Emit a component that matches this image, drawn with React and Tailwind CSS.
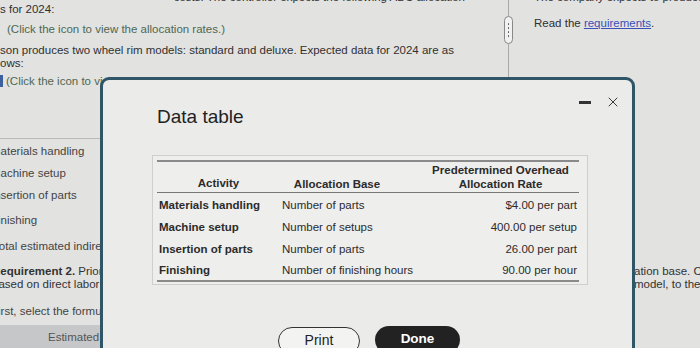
import { X } from "lucide-react";

const rows = [
  ["Materials handling", "Number of parts", "$4.00 per part"],
  ["Machine setup", "Number of setups", "400.00 per setup"],
  ["Insertion of parts", "Number of parts", "26.00 per part"],
  ["Finishing", "Number of finishing hours", "90.00 per hour"],
];

// Modal with the allocation rates table
const DataTableModal = () => (
  <div className="absolute left-[100px] top-[77px] h-[300px] w-[535px] rounded-t-[9px] border-[3px] border-[#2f5567] bg-[#ebebea]">
    <div className="mt-[14px] flex h-[16px] items-center justify-end gap-[14px] pr-[11px]">
      <span className="block h-[3px] w-[12px] bg-[#333]" />
      <X className="h-[16px] w-[16px] text-[#3a3a3a]" strokeWidth={1.5} />
    </div>
    <h2 className="ml-[54px] h-[13px] text-[19px] leading-[13px] text-[#222]">
      Data table
    </h2>

    <div className="ml-[49px] mt-[32px] w-[436px] border border-[#cfcfcf] bg-[#eeeeed] pb-[2px] pl-[4px] pr-[8px] pt-[4px]">
      <table className="w-full table-fixed border-collapse border-y-2 border-[#8a8a8a] text-[11.5px] text-[#2b2b2b]">
        <colgroup>
          <col className="w-[123px]" />
          <col className="w-[114px]" />
          <col />
        </colgroup>
        <thead>
          <tr className="border-b-[1.5px] border-[#777] font-bold">
            <th className="pb-[2px] align-bottom leading-[14px]">Activity</th>
            <th className="pb-[1px] align-bottom leading-[14px]">Allocation Base</th>
            <th className="pl-[28px] pt-[1px] pb-[1px] align-bottom leading-[14px]">
              Predetermined Overhead
              <br />
              Allocation Rate
            </th>
          </tr>
        </thead>
        <tbody>
          {rows.map(([activity, base, rate]) => (
            <tr key={activity} className="h-[22px]">
              <td className="pl-[2px] align-bottom font-bold whitespace-nowrap">{activity}</td>
              <td className="pl-[2px] align-bottom whitespace-nowrap">{base}</td>
              <td className="pr-[2px] align-bottom text-right whitespace-nowrap">{rate}</td>
            </tr>
          ))}
        </tbody>
      </table>
    </div>

    <div className="ml-[175px] mt-[41px] flex items-start gap-[15px]">
      <button className="mt-[1px] h-[28px] w-[82px] rounded-full border border-[#333] bg-[#f3f3f2] text-[14px] text-[#222]">
        Print
      </button>
      <button className="h-[28px] w-[85px] rounded-full bg-[#222] text-[13.5px] font-bold text-white">
        Done
      </button>
    </div>
  </div>
);

export default function App() {
  return (
    <div className="relative h-[348px] w-[700px] overflow-hidden bg-[#e2e2e1] font-['Liberation_Sans',Arial,sans-serif] text-[11.5px] text-[#303030]">
      <div className="flex h-full">
        {/* Left question column */}
        <div className="w-[503px] shrink-0">
          <p className="-mt-[10px] h-[14px] w-[465px] text-right leading-[14px] whitespace-nowrap">
            costs. The controller expects the following ABC allocation
          </p>
          <p className="-mt-[2px] h-[14px] leading-[14px]">s for 2024:</p>
          <p className="ml-[7px] mt-[6px] h-[14px] leading-[14px] text-[#4d6852]">
            (Click the icon to view the allocation rates.)
          </p>
          <p className="mt-[8px] leading-[13px] whitespace-nowrap">
            son produces two wheel rim models: standard and deluxe. Expected data for 2024 are as
            <br />
            ows:
          </p>
          <div className="mt-[4px] flex h-[14px] items-center gap-[3px] leading-[14px] text-[#4d6852]">
            <span className="block h-[12px] w-[3px] bg-[#3d5f9e]" />
            <span>(Click the icon to view the data.)</span>
          </div>

          <div className="mt-[50px] h-px bg-[#b9b9b9]" />
          <div className="text-[#444] leading-[14px] whitespace-nowrap">
            <p className="-ml-[9px] mt-[5px]">Materials handling</p>
            <p className="-ml-[9px] mt-[8px]">Machine setup</p>
            <p className="-ml-[9px] mt-[8px]">Insertion of parts</p>
            <p className="-ml-[9px] mt-[11px]">Finishing</p>
            <p className="-ml-[7px] mt-[12px]">Total estimated indirect costs</p>
            <p className="-ml-[8px] mt-[12px] leading-[13px] text-[#333]">
              <span className="font-bold">Requirement 2.</span> Prior to implementing ABC,
              <br />
              based on direct labor hours.
            </p>
            <p className="-ml-[9px] mt-[13px]">First, select the formula</p>
          </div>
          <div className="mt-[7px] h-[24px] bg-[#c6c7c9] pl-[48px] leading-[24px] text-[#555]">
            Estimated cost
          </div>
        </div>

        {/* Divider with drag handle */}
        <div className="relative w-[10px] shrink-0">
          <div className="mx-auto h-full w-px bg-[#a9a9a9]" />
          <div className="absolute left-px top-[16px] flex h-[28px] w-[9px] flex-col items-center justify-center gap-[2.5px] rounded-full border border-[#888] bg-[#f1f1f1]">
            <span className="block h-[1.5px] w-[1.5px] rounded-full bg-[#555]" />
            <span className="block h-[1.5px] w-[1.5px] rounded-full bg-[#555]" />
            <span className="block h-[1.5px] w-[1.5px] rounded-full bg-[#555]" />
            <span className="block h-[1.5px] w-[1.5px] rounded-full bg-[#555]" />
          </div>
        </div>

        {/* Right column */}
        <div className="flex-1 pl-[21px] whitespace-nowrap">
          <p className="-mt-[10px] h-[14px] leading-[14px]">The company expects to produce</p>
          <p className="mt-[12px] h-[14px] leading-[14px]">
            Read the{" "}
            <span className="text-[#3a4fb8] underline">requirements</span>.
          </p>
          <p className="ml-[100px] mt-[235px] leading-[13px] text-[#333]">
            ation base. Compute
            <br />
            model, to the nearest
          </p>
        </div>
      </div>

      <DataTableModal />
    </div>
  );
}
